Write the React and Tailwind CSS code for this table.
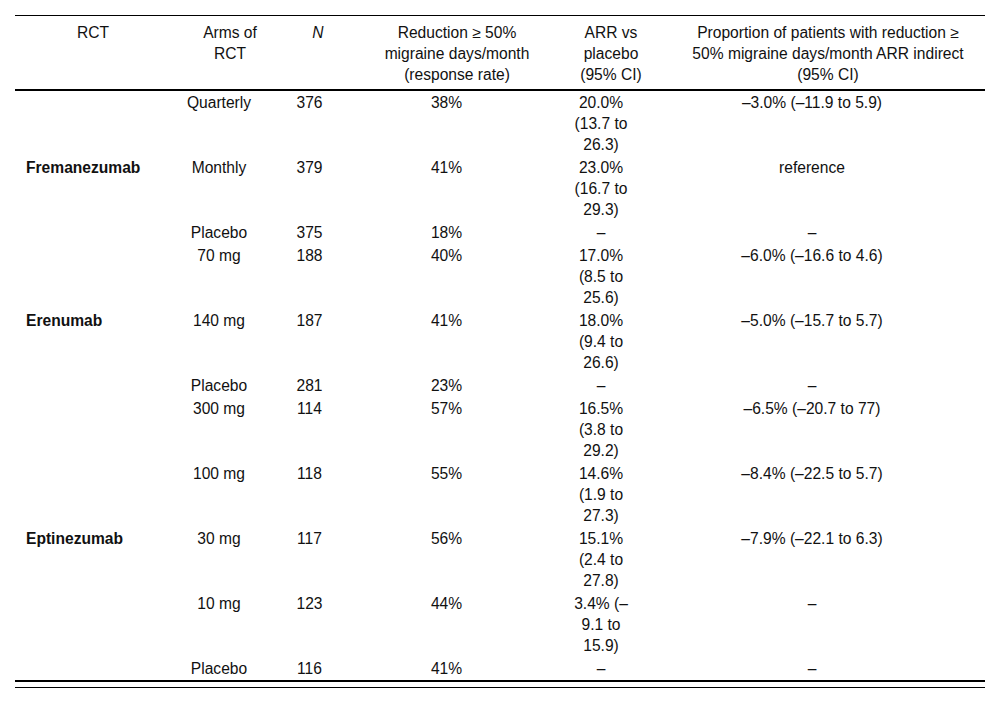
import React from 'react';

const groups = [
  {
    name: 'Fremanezumab',
    rows: [
      { arm: 'Quarterly', n: 376, rate: '38%', arr: '20.0% (13.7 to 26.3)', ind: '–3.0% (–11.9 to 5.9)' },
      { arm: 'Monthly', n: 379, rate: '41%', arr: '23.0% (16.7 to 29.3)', ind: 'reference', label: true },
      { arm: 'Placebo', n: 375, rate: '18%', arr: '–', ind: '–' },
    ],
  },
  {
    name: 'Erenumab',
    rows: [
      { arm: '70 mg', n: 188, rate: '40%', arr: '17.0% (8.5 to 25.6)', ind: '–6.0% (–16.6 to 4.6)' },
      { arm: '140 mg', n: 187, rate: '41%', arr: '18.0% (9.4 to 26.6)', ind: '–5.0% (–15.7 to 5.7)', label: true },
      { arm: 'Placebo', n: 281, rate: '23%', arr: '–', ind: '–' },
    ],
  },
  {
    name: 'Eptinezumab',
    rows: [
      { arm: '300 mg', n: 114, rate: '57%', arr: '16.5% (3.8 to 29.2)', ind: '–6.5% (–20.7 to 77)' },
      { arm: '100 mg', n: 118, rate: '55%', arr: '14.6% (1.9 to 27.3)', ind: '–8.4% (–22.5 to 5.7)' },
      { arm: '30 mg', n: 117, rate: '56%', arr: '15.1% (2.4 to 27.8)', ind: '–7.9% (–22.1 to 6.3)', label: true },
      { arm: '10 mg', n: 123, rate: '44%', arr: '3.4% (–9.1 to 15.9)', ind: '–' },
      { arm: 'Placebo', n: 116, rate: '41%', arr: '–', ind: '–' },
    ],
  },
];

const rows = groups.flatMap((g) => g.rows.map((r) => ({ ...r, group: r.label ? g.name : '' })));

const App = () => {
  return (
    <div className="bg-white min-h-[703px] pt-[15px] px-[15px] text-[#111] text-[15.6px] leading-[21px] font-['Liberation_Sans',Arial,sans-serif]">
      <div className="border-t border-black">
        <table className="w-[970px] table-fixed border-separate border-spacing-0">
          <colgroup>
            <col className="w-[156px]" />
            <col className="w-[118px]" />
            <col className="w-[58px]" />
            <col className="w-[220px]" />
            <col className="w-[88px]" />
            <col className="w-[330px]" />
          </colgroup>
          <thead>
            <tr className="align-top">
              <th className="pt-[6px] pb-[4px] border-b-2 border-black font-normal text-center">RCT</th>
              <th className="pt-[6px] pb-[4px] px-[20px] border-b-2 border-black font-normal text-center whitespace-nowrap">
                Arms of
                <br />
                RCT
              </th>
              <th className="pt-[6px] pb-[4px] border-b-2 border-black font-normal text-center italic">N</th>
              <th className="pt-[6px] pb-[4px] px-[20px] border-b-2 border-black font-normal text-center whitespace-nowrap">
                Reduction ≥ 50%
                <br />
                migraine days/month
                <br />
                (response rate)
              </th>
              <th className="pt-[6px] pb-[4px] px-[4px] border-b-2 border-black font-normal text-center whitespace-nowrap">
                ARR vs
                <br />
                placebo
                <br />
                (95% CI)
              </th>
              <th className="pt-[6px] pb-[4px] pl-[18px] pr-[2px] border-b-2 border-black font-normal text-center whitespace-nowrap">
                Proportion of patients with reduction ≥
                <br />
                50% migraine days/month ARR indirect
                <br />
                (95% CI)
              </th>
            </tr>
          </thead>
          <tbody>
            {rows.map((r, i) => {
              const last = i === rows.length - 1 ? 'border-b-2 border-black' : '';
              return (
                <tr key={i} className="align-top">
                  <td className={`py-[1px] pl-[11px] font-bold ${last}`}>{r.group}</td>
                  <td className={`py-[1px] pr-[22px] text-center ${last}`}>{r.arm}</td>
                  <td className={`py-[1px] pr-[17px] text-center ${last}`}>{r.n}</td>
                  <td className={`py-[1px] pr-[21px] text-center ${last}`}>{r.rate}</td>
                  <td className={`py-[1px] pl-[4px] pr-[24px] text-center ${last}`}>{r.arr}</td>
                  <td className={`py-[1px] pr-[16px] text-center ${last}`}>{r.ind}</td>
                </tr>
              );
            })}
          </tbody>
        </table>
        <div className="mt-[5px] h-px bg-black w-[970px]" />
      </div>
    </div>
  );
};

export default App;
